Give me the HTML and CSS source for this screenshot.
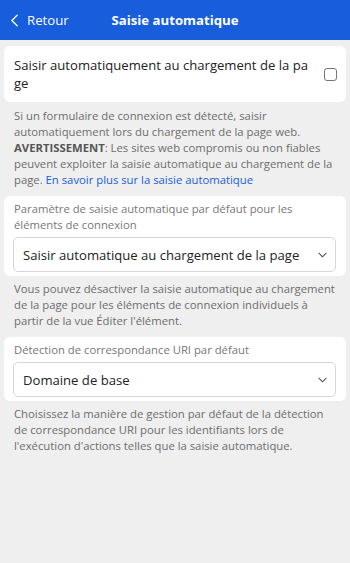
FILE: index.html
```html
<!DOCTYPE html>
<html lang="fr">
<head>
<meta charset="utf-8">
<link rel="stylesheet" href="styles.css">
</head>
<body>
<header class="topbar">
  <div class="back">
    <svg class="back-icon" viewBox="0 0 8 14" width="7" height="13"><path d="M7 1 L1 7 L7 13" fill="none" stroke="#fff" stroke-width="1.5" stroke-linecap="round" stroke-linejoin="round"/></svg>
    <span>Retour</span>
  </div>
  <div class="title">Saisie automatique</div>
</header>
<main class="content">
  <section class="card toggle-card">
    <div class="toggle-label">Saisir automatiquement au chargement de la pa ge</div>
    <span class="checkbox"></span>
  </section>
  <p class="note">Si un formulaire de connexion est détecté, saisir automatiquement lors du chargement de la page web. <b>AVERTISSEMENT</b>: Les sites web compromis ou non fiables peuvent exploiter la saisie automatique au chargement de la page. <a class="link" href="#">En savoir plus sur la saisie automatique</a></p>

  <section class="card field-card">
    <div class="field-label">Paramètre de saisie automatique par défaut pour les éléments de connexion</div>
    <div class="select">
      <span>Saisir automatique au chargement de la page</span>
      <svg class="chev" viewBox="0 0 10 6" width="9" height="6"><path d="M1 1 L5 5 L9 1" fill="none" stroke="#555" stroke-width="1.2" stroke-linecap="round" stroke-linejoin="round"/></svg>
    </div>
  </section>
  <p class="note">Vous pouvez désactiver la saisie automatique au chargement de la page pour les éléments de connexion individuels à partir de la vue Éditer l'élément.</p>

  <section class="card field-card">
    <div class="field-label">Détection de correspondance URI par défaut</div>
    <div class="select">
      <span>Domaine de base</span>
      <svg class="chev" viewBox="0 0 10 6" width="9" height="6"><path d="M1 1 L5 5 L9 1" fill="none" stroke="#555" stroke-width="1.2" stroke-linecap="round" stroke-linejoin="round"/></svg>
    </div>
  </section>
  <p class="note">Choisissez la manière de gestion par défaut de la détection de correspondance URI pour les identifiants lors de l'exécution d'actions telles que la saisie automatique.</p>
</main>
</body>
</html>
```
FILE: styles.css
```css
* { box-sizing: border-box; }
html, body { margin: 0; padding: 0; }
body {
  width: 350px;
  height: 563px;
  background: #efefef;
  font-family: "Open Sans", "Noto Sans", sans-serif;
  color: #222;
  overflow: hidden;
}
.topbar {
  height: 40px;
  background: #175ddc;
  color: #fff;
  display: flex;
  align-items: center;
  position: relative;
}
.back {
  display: flex;
  align-items: center;
  gap: 9px;
  padding-left: 11px;
  font-size: 13.2px;
}
.title {
  position: absolute;
  left: 0;
  right: 0;
  text-align: center;
  font-weight: 700;
  font-size: 13.2px;
  pointer-events: none;
}
.content {
  padding: 6px 4px 0;
}
.card {
  background: #fff;
  border-radius: 6px;
}
.toggle-card {
  display: flex;
  align-items: center;
  padding: 10px 9px 10px 10px;
  gap: 14px;
}
.toggle-label {
  flex: 1;
  font-size: 13.1px;
  line-height: 18px;
}
.checkbox {
  width: 13px;
  height: 13px;
  border: 1px solid #767676;
  border-radius: 3px;
  flex: none;
}
.note {
  margin: 5px 0 8px;
  padding: 0 10px;
  font-size: 11.3px;
  line-height: 16px;
  color: #6d6d6d;
}
.toggle-card + .note { margin-top: 6px; }
.note b { color: #555; font-weight: 700; }
.link { color: #175ddc; text-decoration: none; }
.field-card {
  padding: 5px 10px 4px 9px;
  display: flex;
  flex-direction: column;
  gap: 4px;
}
.field-label {
  font-size: 11.3px;
  line-height: 16px;
  color: #777;
  padding-left: 1px;
}
.select {
  height: 35px;
  border: 1px solid #d6d6d6;
  border-radius: 5px;
  display: flex;
  align-items: center;
  justify-content: space-between;
  padding: 0 8px 0 9px;
  font-size: 13.1px;
  color: #222;
}
.chev { flex: none; }
```
